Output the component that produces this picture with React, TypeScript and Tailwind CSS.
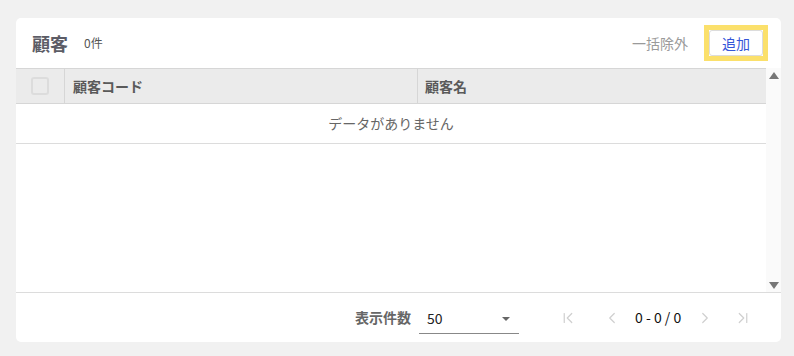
import { ChevronLeft, ChevronRight, ChevronFirst, ChevronLast } from "lucide-react";

const font = { fontFamily: '"Noto Sans CJK JP", "Noto Sans", sans-serif' };

export default function App() {
  return (
    <div className="w-[794px] h-[356px] bg-[#f1f1f1] pt-[18px] pl-4" style={font}>
      <div className="w-[765px] h-[324px] bg-white rounded-[5px] flex flex-col overflow-hidden">
        {/* header */}
        <div className="h-[50px] shrink-0 flex items-center pl-4 pr-[13px]">
          <h1 className="text-[18px] font-bold text-[#5c5c66] leading-none">顧客</h1>
          <span className="ml-4 text-[12px] text-[#555] leading-none">0件</span>
          <div className="flex-1" />
          <button className="text-[14px] text-[#9a9a9a] mr-4">一括除外</button>
          <div className="w-[64px] h-[36px] border-[5px] border-[#fbe06b] flex">
            <button className="flex-1 bg-white border border-[#dcdcdc] rounded-[3px] text-[14px] text-[#3556d8]">
              追加
            </button>
          </div>
        </div>

        {/* table */}
        <div className="flex flex-1 min-h-0">
          <div className="w-[750px] flex flex-col">
            <div className="h-[36px] flex bg-[#ebebeb] border-y border-[#d6d6d6] text-[14px] font-bold text-[#5a5a5a]">
              <div className="w-[49px] flex items-center justify-center border-r border-[#d6d6d6]">
                <div className="w-[18px] h-[18px] rounded-[3px] border-2 border-[#dcdcdc]" />
              </div>
              <div className="w-[353px] flex items-center pl-[8px] border-r border-[#d6d6d6]">顧客コード</div>
              <div className="flex-1 flex items-center pl-[7px]">顧客名</div>
            </div>
            <div className="h-[40px] flex items-center justify-center border-b border-[#dcdcdc] text-[14px] text-[#666]">
              データがありません
            </div>
            <div className="flex-1 border-b border-[#dcdcdc]" />
          </div>
          <div className="w-[15px] flex flex-col items-center justify-between bg-[#fafafa] pt-[3px] pb-[2px] border-b border-[#dcdcdc]">
            <svg width="10" height="7" viewBox="0 0 10 7" className="mt-[1px]">
              <path d="M5 0L10 7H0z" fill="#777" />
            </svg>
            <svg width="10" height="7" viewBox="0 0 10 7" className="mb-[1px]">
              <path d="M0 0h10L5 7z" fill="#777" />
            </svg>
          </div>
        </div>

        {/* footer */}
        <div className="h-[49px] shrink-0 flex items-center">
          <span className="ml-[339px] text-[14px] font-bold text-[#666]">表示件数</span>
          <div className="ml-2 w-[100px] h-[30px] border-b border-[#888] flex items-center pl-2 pr-[9px] mt-[3px]">
            <span className="text-[14px] text-[#222] flex-1">50</span>
            <svg width="8" height="4" viewBox="0 0 8 4">
              <path d="M0 0h8L4 4z" fill="#666" />
            </svg>
          </div>
          <div className="ml-[40px] flex items-center text-[#cfcfcf]">
            <ChevronFirst size={18} strokeWidth={1.6} />
            <ChevronLeft size={18} strokeWidth={1.6} className="ml-[26px]" />
            <span className="ml-[14px] text-[14px] text-[#111]">0 - 0 / 0</span>
            <ChevronRight size={18} strokeWidth={1.6} className="ml-[15px]" />
            <ChevronLast size={18} strokeWidth={1.6} className="ml-[20px]" />
          </div>
        </div>
      </div>
    </div>
  );
}
